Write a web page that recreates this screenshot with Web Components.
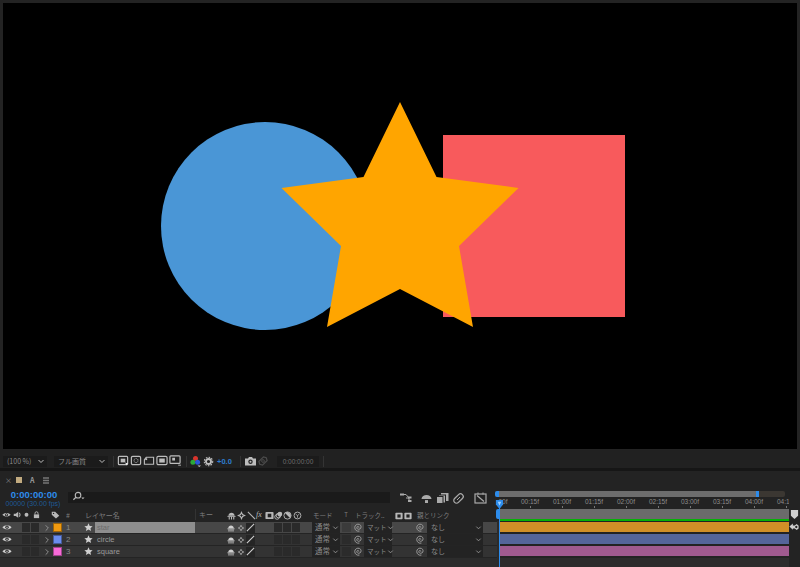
<!DOCTYPE html>
<html lang="ja">
<head>
<meta charset="utf-8">
<title>timeline</title>
<style>
  html, body { margin: 0; padding: 0; background: #232323; }
  body { width: 800px; height: 567px; overflow: hidden; font-family: "Noto Sans CJK JP", "Liberation Sans", sans-serif; color: #999; }
</style>
</head>
<body>
<ae-app></ae-app>
<script>
const ICONS = {
  eye: '<path d="M0.5 5C3 1.8 9 1.8 11.5 5 9 8.2 3 8.2 0.5 5z" fill="currentColor"/><circle cx="6" cy="5" r="2" fill="#222"/><circle cx="6" cy="5" r=".9" fill="currentColor"/>',
  audio: '<path d="M1 3.5h2.5L7 1v8L3.5 6.5H1z" fill="currentColor"/><path d="M8.2 2.5c1.6 1.4 1.6 3.6 0 5" stroke="currentColor" fill="none" stroke-width="1.4"/>',
  dot: '<circle cx="6" cy="5" r="2.6" fill="currentColor"/>',
  lock: '<rect x="2.5" y="4.5" width="7" height="5" fill="currentColor"/><path d="M4 4.5V3a2 2 0 0 1 4 0v1.5" fill="none" stroke="currentColor" stroke-width="1.2"/>',
  tag: '<path d="M1 1h4.6L11 6.4 6.6 10 1 5z" fill="currentColor"/><circle cx="3.4" cy="3.2" r=".9" fill="#222"/>',
  star: '<path d="M6 .4l1.6 3.5 3.9.4-2.9 2.6.8 3.8L6 8.8 2.6 10.7l.8-3.8L.5 4.3l3.9-.4z" fill="currentColor"/>',
  shy: '<path d="M1.5 5.2C1.8.8 8.2.8 8.5 5.2z" fill="currentColor"/><path d="M.5 6h9" stroke="currentColor" stroke-width="1"/><path d="M2.5 6.5v3M5 6.5v3M7.5 6.5v3" stroke="currentColor" stroke-width="1.2"/>',
  collapse: '<path d="M5 1.5l1.1 2.4L8.5 5 6.1 6.1 5 8.5 3.9 6.1 1.5 5l2.4-1.1z" fill="none" stroke="currentColor" stroke-width="1.2"/>',
  slash: '<path d="M1 9L9 1" stroke="currentColor" stroke-width="1.2"/>',
  backslash: '<path d="M1 1L9 9" stroke="currentColor" stroke-width="1.2"/>',
  frames: '<rect x=".5" y="1" width="9" height="8" rx="1" fill="currentColor"/><rect x="3" y="3" width="4" height="4" fill="#222"/>',
  blur: '<circle cx="3.4" cy="6.6" r="2.6" fill="none" stroke="currentColor"/><circle cx="5" cy="5" r="2.6" fill="none" stroke="currentColor"/><circle cx="6.6" cy="3.4" r="2.6" fill="currentColor"/>',
  adjust: '<circle cx="5" cy="5" r="4" fill="none" stroke="currentColor"/><path d="M2.2 2.2a4 4 0 0 1 5.6 5.6z" fill="currentColor"/>',
  cube: '<circle cx="5" cy="5" r="3.8" fill="none" stroke="currentColor"/><path d="M3 3.5l2 1.5 2-1.5M5 5v2.5" stroke="currentColor" fill="none" stroke-width=".8"/>',
  spiral: '<path d="M5.2 5.2c.8-1.2-1.4-2-2-.6-.7 1.7 1.6 3.1 3.3 2.1 2-1.2 1.7-4.2-.4-5.1C3.6.6.8 2.3.8 5c0 2.7 2.5 4.7 5.2 4" fill="none" stroke="currentColor" stroke-width="1.1"/>',
  chev: '<path d="M1.5 3l2.5 2.5L6.5 3" fill="none" stroke="currentColor" stroke-width="1"/>',
  twirl: '<path d="M3 1.5L6 4.5 3 7.5" fill="none" stroke="currentColor" stroke-width="1"/>',
  search: '<circle cx="6.5" cy="4.5" r="3" fill="none" stroke="currentColor" stroke-width="1.2"/><path d="M4.4 6.6L1.5 9.5" stroke="currentColor" stroke-width="1.4"/><path d="M10 7h3.5l-1.75 2z" fill="currentColor"/>',
  region: '<rect x="1.5" y="1.5" width="10" height="9" rx="1" fill="none" stroke="currentColor" stroke-width="1.3"/><rect x="4" y="4" width="5" height="4" fill="currentColor"/><path d="M9 8l3 1.5-1.5.5-.5 1.5z" fill="#fff"/>',
  grid: '<rect x="1.5" y="1.5" width="10" height="9" rx="1.5" fill="none" stroke="currentColor" stroke-width="1.3"/><circle cx="6.5" cy="6" r="2.2" fill="none" stroke="currentColor" stroke-dasharray="1 .8"/>',
  mask: '<path d="M3.5 2.5h8V10H1.5V5z" fill="none" stroke="currentColor" stroke-width="1.2"/><rect x="2.5" y="3.5" width="2" height="2" fill="currentColor"/>',
  safe: '<rect x="1" y="1.5" width="11" height="9" rx="1.5" fill="none" stroke="currentColor" stroke-width="1.3"/><rect x="3.5" y="3.8" width="6" height="4.4" fill="currentColor"/>',
  pixel: '<rect x="1" y="1" width="11" height="8" rx="1" fill="none" stroke="currentColor" stroke-width="1.3"/><rect x="3.5" y="3" width="3" height="3" fill="currentColor"/><path d="M10 10.5h3v1h-3z" fill="currentColor"/>',
  channels: '<circle cx="6.5" cy="3.5" r="2.5" fill="#d8342c"/><circle cx="3.9" cy="7.3" r="2.5" fill="#2ca838"/><circle cx="8.6" cy="7.3" r="2.5" fill="#2c55d8"/><path d="M8.5 10.5h3.5l-1.75 1.5z" fill="#ccc"/>',
  gear: '<circle cx="6.5" cy="6.5" r="3" fill="none" stroke="currentColor" stroke-width="2.2"/><circle cx="6.5" cy="6.5" r="5" fill="none" stroke="currentColor" stroke-width="1.3" stroke-dasharray="1.8 1.5"/>',
  camera: '<path d="M1 3.5h3L5 2h3l1 1.5h3V10.5H1z" fill="currentColor"/><circle cx="6.5" cy="6.7" r="2.2" fill="#232323"/><circle cx="6.5" cy="6.7" r="1" fill="currentColor"/>',
  snap: '<path d="M2 7l5-5 3 1 1 3-5 5-3-1z" fill="none" stroke="currentColor" stroke-width="1.3"/><circle cx="6.5" cy="6.5" r="1.5" fill="none" stroke="currentColor"/>',
  flow: '<path d="M2 2.5h4l3 3.5v2" fill="none" stroke="currentColor" stroke-width="1"/><path d="M6 6h3" stroke="currentColor"/><rect x="0" y="1.5" width="4" height="2" fill="currentColor"/><rect x="8" y="4.5" width="3.5" height="2" fill="currentColor"/><rect x="8" y="8" width="3.5" height="2" fill="currentColor"/>',
  comp: '<rect x="5" y="1" width="7.5" height="8" fill="currentColor"/><rect x="2.5" y="3" width="7" height="8" fill="currentColor" stroke="#232323"/><rect x=".5" y="4.5" width="6.5" height="7" fill="currentColor" stroke="#232323"/>',
  graph: '<rect x="1" y="2" width="11" height="9" fill="none" stroke="currentColor" stroke-width="1.2"/><path d="M3 3.5L10 9.5" stroke="currentColor" stroke-width="1.2"/><path d="M4 .5v2M9 .5v2" stroke="currentColor"/>',
  clip: '<rect x="1" y="3.8" width="11" height="5.4" rx="2.7" fill="none" stroke="currentColor" stroke-width="1.3" transform="rotate(-45 6.5 6.5)"/><path d="M5 8L8 5" stroke="currentColor"/>',
  swap: '<path d="M.5 6L5 2v2.5h2.5L10 2.5 12.5 5v3.5L10 10.500 7.500 8.500H5V10z" fill="currentColor"/><circle cx="9.500" cy="6.500" r="1.500" fill="#232323"/>',
  marker: '<path d="M1 0h8v6.500L5 10 1 6.500z" fill="currentColor"/>',
  head: '<path d="M1 0h8v5L5 10 1 5z" fill="currentColor"/><path d="M3 2h4L5 6z" fill="#9fd0ff"/>',
  lift: '<path d="M1.500 7C1.700 1.500 11.300 1.500 11.500 7z" fill="currentColor"/><path d="M5 8h3v3H5z" fill="currentColor"/><path d="M.5 7.600h12" stroke="#232323"/>',
  menu: '<path d="M1 2h6M1 4.500h6M1 7h6" stroke="currentColor" stroke-width="1.3"/>'
};

class BaseElement extends HTMLElement {
  constructor() {
    super();
    this._shadowRoot = this.attachShadow({ mode: 'open' });
  }
  connectedCallback() {
    this.render();
  }
}

class AeIcon extends BaseElement {
  render() {
    const size = Number(this.getAttribute('size') || 10);
    const box = this.getAttribute('box') || '12';
    const name = this.getAttribute('name');
    this._shadowRoot.innerHTML = `
      <style>
        :host{ display: inline-flex; align-items: center; justify-content: center; line-height: 0; }
      </style>
      <svg width="${size}" height="${size}" viewBox="0 0 ${box} ${box}">${ICONS[name] || ''}</svg>`;
  }
}

class AeViewer extends BaseElement {
  render() {
    this._shadowRoot.innerHTML = `
      <style>
        :host{ display: block; height: 446px; margin: 3px 3px 1px; background: #000; }
        svg{ display: block; }
      </style>
      <svg width="794" height="446" viewBox="3 3 794 446">
        <rect x="443" y="135" width="182" height="182" fill="#f85a5c"/>
        <circle cx="265" cy="226" r="104" fill="#4a96d6"/>
        <polygon fill="#ffa500" points="400,102 436.5,177 518.5,188 459,246 473,327 400,289 327,327 341,246 281.5,188 363.5,177"/>
      </svg>`;
  }
}

class AeToolbar extends BaseElement {
  render() {
    this._shadowRoot.innerHTML = `
      <style>
        :host{ display: flex; align-items: center; height: 14px; padding: 4px 0 0 3px; background: #212121; border-bottom: 3px solid #161616; font-size: 7px; color: #8a8a8a; }
        .drop{ display: flex; align-items: center; justify-content: space-between; height: 11px; background: #1b1b1b; padding: 0 2px 0 4px; box-sizing: border-box; white-space: nowrap; }
        .zoom{ width: 44px; }
        .quality{ width: 54px; margin-left: 7px; }
        .sep{ width: 1px; height: 11px; background: #343434; }
        ae-icon{ color: #bdbdbd; width: 13px; }
        .drop ae-icon{ width: 8px; }
        .plus{ color: #2d7ed0; font: 700 7.5px "Liberation Sans", sans-serif; margin-left: 2px; width: 18px; }
        .time{ width: 42px; height: 11px; background: #1b1b1b; margin-left: 7.5px; text-align: center; color: #6e6e6e; font: 6.5px/11px "Liberation Sans", sans-serif; }
      </style>
      <div class="drop zoom"><span>(100 %)</span><ae-icon name="chev" size="8" box="8"></ae-icon></div>
      <div class="drop quality"><span>フル画質</span><ae-icon name="chev" size="8" box="8"></ae-icon></div>
      <div class="sep" style="margin:0 2px 0 5px"></div>
      <ae-icon name="region" size="12" box="13"></ae-icon>
      <ae-icon name="grid" size="12" box="13"></ae-icon>
      <ae-icon name="mask" size="12" box="13"></ae-icon>
      <ae-icon name="safe" size="12" box="13"></ae-icon>
      <ae-icon name="pixel" size="12" box="13"></ae-icon>
      <div class="sep" style="margin:0 2px 0 5px"></div>
      <ae-icon name="channels" size="13" box="13"></ae-icon>
      <ae-icon name="gear" size="11" box="13"></ae-icon>
      <span class="plus">+0.0</span>
      <div class="sep" style="margin:0 2.5px 0 5px"></div>
      <ae-icon name="camera" size="13" box="13"></ae-icon>
      <ae-icon name="snap" size="12" box="13" style="color:#4c4c4c"></ae-icon>
      <div class="time">0:00:00:00</div>
      <div class="sep" style="margin-left:4px"></div>`;
  }
}

const COLUMNS = '13px 9px 9px 10px 10px 12px 19px 13px 102px 29px 10px 10px 10px 9px 9px 9px 9px 10px 10px 28px 12px 12px 28px 22px 12px 57px 14px';

class AeLayerHeader extends BaseElement {
  render() {
    this._shadowRoot.innerHTML = `
      <style>
        :host{ display: grid; grid-template-columns: ${COLUMNS}; height: 13px; align-items: center; font-size: 7px; color: #7d7d7d; white-space: nowrap; background: #232323; }
        ae-icon{ color: #b8b8b8; }
        span{ position: relative; top: -1px; }
        .n{ padding-left: 3px; }
        .line{ border-left: 1px solid #333; height: 11px; line-height: 11px; padding-left: 3px; margin-left: -2px; }
        .pair{ display: flex; gap: 1px; justify-content: flex-end; padding-right: 2px; top: 0; }
      </style>
      <ae-icon name="eye" size="9"></ae-icon>
      <ae-icon name="audio" size="9"></ae-icon>
      <ae-icon name="dot" size="9"></ae-icon>
      <ae-icon name="lock" size="9"></ae-icon>
      <span></span>
      <ae-icon name="tag" size="9" style="margin-left:-3px"></ae-icon>
      <span class="n">#</span>
      <span></span>
      <span style="margin-left:-10px">レイヤー名</span>
      <span class="line">キー</span>
      <ae-icon name="shy" size="9" box="10"></ae-icon>
      <ae-icon name="collapse" size="9" box="10"></ae-icon>
      <ae-icon name="backslash" size="9" box="10"></ae-icon>
      <span style="font-style:italic;color:#b8b8b8;font-size:8px;font-family:'Liberation Serif',serif">fx</span>
      <ae-icon name="frames" size="9" box="10"></ae-icon>
      <ae-icon name="blur" size="9" box="10"></ae-icon>
      <ae-icon name="adjust" size="9" box="10"></ae-icon>
      <ae-icon name="cube" size="9" box="10"></ae-icon>
      <span></span>
      <span style="padding-left:1px;font-size:6.5px">モード</span>
      <span style="font-size:6px;text-align:center">T</span>
      <span style="grid-column: span 2;padding-left:3px;font-size:6.5px">トラック..</span>
      <span class="pair"><ae-icon name="frames" size="8" box="10"></ae-icon><ae-icon name="frames" size="8" box="10"></ae-icon></span>
      <span style="grid-column: span 2;padding-left:3px;font-size:6.5px">親とリンク</span>`;
  }
}

class AeLayerRow extends BaseElement {
  render() {
    const selected = this.hasAttribute('selected');
    this._shadowRoot.innerHTML = `
      <style>
        :host{ display: grid; grid-template-columns: ${COLUMNS}; height: 11px; border-bottom: 1px solid #242424; align-items: center; font-size: 7px; color: #9a9a9a; white-space: nowrap; background: ${selected ? '#474747' : '#333'}; }
        ae-icon{ color: #d0d0d0; }
        .well{ display: block; width: 8px; height: 9px; background: #2a2a2a; justify-self: start; }
        .swatch{ display: block; width: 7px; height: 7px; margin-left: 2px; background: ${this.getAttribute('label')}; border: 1px solid rgba(0,0,0,.35); }
        .num{ padding-left: 3px; color: #8a8a8a; font: 8px "Liberation Sans", sans-serif; }
        .name{ display: block; padding-left: 2px; height: 11px; line-height: 11px; font-family: "Liberation Sans", sans-serif; font-size: 7.5px; color: ${selected ? '#6b6b6b' : '#9a9a9a'}; background: ${selected ? '#8e8e8e' : 'transparent'}; margin-right: 2px; }
        .drop{ display: flex; align-items: center; justify-content: space-between; height: 11px; background: #232323; padding: 0 1px 0 3px; box-sizing: border-box; color: #8a8a8a; }
        .drop span{ position: relative; top: -1px; }
        .drop ae-icon{ color: #999; }
        .slash{ background: #252525; height: 10px; width: 9px; }
        .dim{ color: #9a9a9a; }
        .t{ width: 9px; height: 9px; background: ${selected ? '#3b3b3b' : '#2b2b2b'}; margin-left: 2px; display: block; }
      </style>
      <ae-icon name="eye" size="10"></ae-icon>
      <span></span>
      <span class="well"></span>
      <span class="well"></span>
      <ae-icon name="twirl" size="8" box="9" class="dim" style="margin-left:1px"></ae-icon>
      <span class="swatch"></span>
      <span class="num">${this.getAttribute('num')}</span>
      <ae-icon name="star" size="9"></ae-icon>
      <span class="name"><slot></slot></span>
      <span></span>
      <ae-icon name="shy" size="8" box="10"></ae-icon>
      <ae-icon name="collapse" size="8" box="10" class="dim"></ae-icon>
      <ae-icon name="slash" size="9" box="10" class="slash"></ae-icon>
      <span></span><span></span>
      <span class="well"></span><span class="well"></span><span class="well"></span>
      <span></span>
      <span class="drop"><span style="font-size:7.5px">通常</span><ae-icon name="chev" size="7" box="8"></ae-icon></span>
      <span class="t"></span>
      <ae-icon name="spiral" size="9" box="10" class="dim"></ae-icon>
      <span class="drop"><span style="font-size:6.5px">マット</span><ae-icon name="chev" size="7" box="8"></ae-icon></span>
      <span></span>
      <ae-icon name="spiral" size="9" box="10" class="dim"></ae-icon>
      <span class="drop" style="margin-left:1px"><span style="padding-left:1px">なし</span><ae-icon name="chev" size="7" box="8"></ae-icon></span>
      <span></span>`;
  }
}

class AeTimeRuler extends BaseElement {
  render() {
    const labels = ['00:15f', '01:00f', '01:15f', '02:00f', '02:15f', '03:00f', '03:15f', '04:00f', '04:15f'];
    this._shadowRoot.innerHTML = `
      <style>
        :host{ display: block; height: 50px; font: 6.5px "Liberation Sans", sans-serif; color: #8c8c8c; }
        .nav{ display: flex; height: 6px; margin: 20px 15px 0 -2px; background: #3b3732; border-radius: 2px; }
        .nav i{ display: block; width: 257px; background: #6d6d6d; border-left: 4px solid #2d8ceb; border-right: 3px solid #2d8ceb; border-radius: 2px 0 0 2px; }
        .ruler{ display: flex; height: 12px; margin-left: -1px; width: 293px; overflow: hidden; }
        .ruler span{ flex: 0 0 32px; text-align: center; height: 10px; line-height: 8px; white-space: nowrap; position: relative; margin-top: 1px; }
        .ruler span::after{ content: ""; position: absolute; left: 50%; bottom: 0; height: 2px; border-left: 1px solid #777; }
        .ruler .first{ flex: 0 0 18px; box-sizing: border-box; text-align: right; padding-right: 6.5px; }
        .ruler .first::after{ display: none; }
        .area{ height: 10px; margin: 0 11px 0 -1px; background: #6b6b6b; border-left: 4px solid #2d8ceb; border-radius: 2px 0 0 2px; }
        .green{ height: 2px; margin: 0 11px 0 3px; background: #06b106; }
      </style>
      <div class="nav"><i></i></div>
      <div class="ruler"><span class="first">00f</span>${labels.map((l) => `<span>${l}</span>`).join('')}</div>
      <div class="area"></div>
      <div class="green"></div>`;
  }
}

class AeTimeBar extends BaseElement {
  render() {
    this._shadowRoot.innerHTML = `
      <style>
        :host{ display: block; height: 10px; margin: 0 11px 2px 3px; background: ${this.getAttribute('color')}; }
      </style>`;
  }
}

class AeTimeline extends BaseElement {
  render() {
    this._shadowRoot.innerHTML = `
      <style>
        :host{ display: grid; grid-template-columns: 497px 303px; position: relative; height: 96px; background: #232323; overflow: hidden; }
        .left{ display: flex; flex-direction: column; }
        .tabs{ display: flex; align-items: center; height: 17px; padding-left: 5px; gap: 4px; color: #8a8a8a; font-size: 7px; }
        .swatch{ width: 6px; height: 6px; background: #c2ab80; margin: 0 4px 0 0; }
        .controls{ display: flex; height: 21px; }
        .clock{ width: 68px; padding-top: 2px; text-align: center; white-space: nowrap; }
        .clock b{ display: block; color: #2d8ceb; font: 700 9.5px/10px "Liberation Sans", sans-serif; }
        .clock small{ display: block; color: #1e5a96; font: 7px/8px "Liberation Sans", sans-serif; margin-left: -2px; }
        .search{ width: 322px; height: 11px; margin-top: 4px; background: #1a1a1a; padding: 0 4px; box-sizing: border-box; display: flex; align-items: center; color: #b8b8b8; }
        .actions{ display: flex; align-items: flex-start; padding-top: 4px; color: #aaa; }
        .rows{ background: #2c2c2c; flex: 1; }
        .right{ display: flex; flex-direction: column; }
        .bars{ flex: 1; padding-top: 1px; background: linear-gradient(90deg, #2b2b2b 3px, #232323 3px); }
        .lower{ height: 10px; background: #2c2c2c; margin: 0 11px 0 3px; }
        .playhead{ position: absolute; left: 499px; top: 35px; bottom: 0; width: 1px; background: #2d8ceb; }
        .head{ position: absolute; left: 495px; top: 29px; color: #2d8ceb; }
        .cap{ position: absolute; left: 790px; top: 39px; color: #cfcfcf; }
        .swap{ position: absolute; left: 789px; top: 51px; color: #d0d0d0; }
      </style>
      <div class="left">
        <div class="tabs">
          <span>×</span><span class="swatch"></span><b style="font-size:7px;font-weight:700;color:#9a9a9a">A</b>
          <ae-icon name="menu" size="8" box="8" style="margin-left:3px;color:#777"></ae-icon>
        </div>
        <div class="controls">
          <div class="clock"><b>0:00:00:00</b><small>00000 (30.00 fps)</small></div>
          <div class="search"><ae-icon name="search" size="13" box="14"></ae-icon></div>
          <div class="actions">
            <ae-icon name="flow" size="12" style="margin-left:10px"></ae-icon>
            <ae-icon name="lift" size="13" box="13" style="margin-left:8px"></ae-icon>
            <ae-icon name="comp" size="13" box="13" style="margin-left:3px"></ae-icon>
            <ae-icon name="clip" size="13" box="13" style="margin-left:3px"></ae-icon>
            <ae-icon name="graph" size="13" box="13" style="margin-left:9px"></ae-icon>
          </div>
        </div>
        <ae-layer-header></ae-layer-header>
        <div class="rows">
          <ae-layer-row num="1" label="#f09a10" selected>star</ae-layer-row>
          <ae-layer-row num="2" label="#6a8cee">circle</ae-layer-row>
          <ae-layer-row num="3" label="#f76ad8">square</ae-layer-row>
        </div>
      </div>
      <div class="right">
        <ae-time-ruler></ae-time-ruler>
        <div class="bars">
          <ae-time-bar color="#d18f27"></ae-time-bar>
          <ae-time-bar color="#55659a"></ae-time-bar>
          <ae-time-bar color="#a05a8f"></ae-time-bar>
          <div class="lower"></div>
        </div>
      </div>
      <div class="playhead"></div>
      <ae-icon class="head" name="head" size="9" box="10"></ae-icon>
      <ae-icon class="cap" name="marker" size="9" box="10"></ae-icon>
      <ae-icon class="swap" name="swap" size="10" box="13"></ae-icon>`;
  }
}

class AeApp extends BaseElement {
  render() {
    this._shadowRoot.innerHTML = `
      <style>
        :host{ display: block; width: 800px; height: 567px; overflow: hidden; background: #232323; }
      </style>
      <ae-viewer></ae-viewer>
      <ae-toolbar></ae-toolbar>
      <ae-timeline></ae-timeline>`;
  }
}

customElements.define('ae-icon', AeIcon);
customElements.define('ae-viewer', AeViewer);
customElements.define('ae-toolbar', AeToolbar);
customElements.define('ae-layer-header', AeLayerHeader);
customElements.define('ae-layer-row', AeLayerRow);
customElements.define('ae-time-ruler', AeTimeRuler);
customElements.define('ae-time-bar', AeTimeBar);
customElements.define('ae-timeline', AeTimeline);
customElements.define('ae-app', AeApp);
</script>
</body>
</html>
